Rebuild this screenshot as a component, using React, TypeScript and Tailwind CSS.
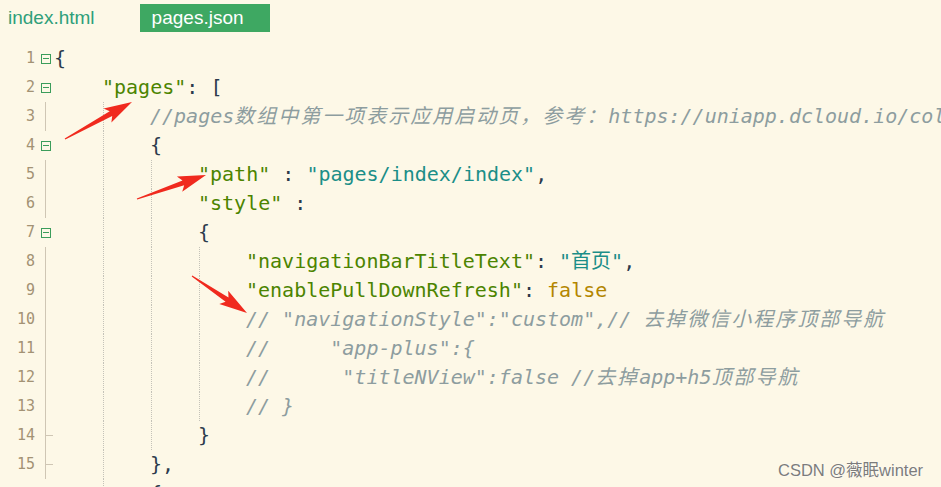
type Tok = [string, string];

const K = "text-[#4c8400]";
const S = "text-[#1b8e88]";
const P = "text-[#2c3a4c]";
const B = "text-[#b38600]";
const C = "text-[#8d9d9f] italic";

interface Line {
  n: number;
  indent: number;
  toks: Tok[];
  gutter: "box" | "line" | "tick" | "none";
}

const lines: Line[] = [
  { n: 1, indent: 0, gutter: "box", toks: [["{", P]] },
  { n: 2, indent: 1, gutter: "box", toks: [['"pages"', K], [": [", P]] },
  {
    n: 3,
    indent: 2,
    gutter: "line",
    toks: [
      ["//pages", C],
      ["数组中第一项表示应用启动页，参考：", C + " tracking-[2px]"],
      ["https://uniapp.dcloud.io/collocation/pages", C],
    ],
  },
  { n: 4, indent: 2, gutter: "box", toks: [["{", P]] },
  {
    n: 5,
    indent: 3,
    gutter: "line",
    toks: [['"path"', K], [" : ", P], ['"pages/index/index"', S], [",", P]],
  },
  { n: 6, indent: 3, gutter: "line", toks: [['"style"', K], [" :", P]] },
  { n: 7, indent: 3, gutter: "box", toks: [["{", P]] },
  {
    n: 8,
    indent: 4,
    gutter: "line",
    toks: [['"navigationBarTitleText"', K], [": ", P], ['"首页"', S], [",", P]],
  },
  {
    n: 9,
    indent: 4,
    gutter: "line",
    toks: [['"enablePullDownRefresh"', K], [": ", P], ["false", B]],
  },
  {
    n: 10,
    indent: 4,
    gutter: "line",
    toks: [
      ['// "navigationStyle":"custom",// ', C],
      ["去掉微信小程序顶部导航", C + " tracking-[2px]"],
    ],
  },
  { n: 11, indent: 4, gutter: "line", toks: [['//     "app-plus":{', C]] },
  {
    n: 12,
    indent: 4,
    gutter: "line",
    toks: [
      ['//      "titleNView":false //', C],
      ["去掉", C + " tracking-[2px]"],
      ["app+h5", C],
      ["顶部导航", C + " tracking-[2px]"],
    ],
  },
  { n: 13, indent: 4, gutter: "line", toks: [["// }", C]] },
  { n: 14, indent: 3, gutter: "tick", toks: [["}", P]] },
  { n: 15, indent: 2, gutter: "tick", toks: [["},", P]] },
  { n: 16, indent: 2, gutter: "none", toks: [["{", P]] },
];

function arrowPoints(tx: number, ty: number, px: number, py: number) {
  const dx = px - tx;
  const dy = py - ty;
  const len = Math.hypot(dx, dy);
  const ux = dx / len;
  const uy = dy / len;
  const nx = -uy;
  const ny = ux;
  const L = 24;
  const bx = px - ux * L;
  const by = py - uy * L;
  const wx = px - ux * (L + 4);
  const wy = py - uy * (L + 4);
  const pts = [
    [tx + nx * 0.6, ty + ny * 0.6],
    [bx + nx * 2.6, by + ny * 2.6],
    [wx + nx * 8, wy + ny * 8],
    [px, py],
    [wx - nx * 8, wy - ny * 8],
    [bx - nx * 2.6, by - ny * 2.6],
    [tx - nx * 0.6, ty - ny * 0.6],
  ];
  return pts.map((p) => p[0].toFixed(1) + "," + p[1].toFixed(1)).join(" ");
}

function Gutter({ kind }: { kind: Line["gutter"] }) {
  if (kind === "box") {
    return (
      <div className="w-[20px] shrink-0 h-full flex items-center pl-[6px]">
        <div className="w-[10px] h-[10px] border border-[#3b9d5b] flex items-center justify-center">
          <div className="w-[6px] h-px bg-[#3b9d5b]" />
        </div>
      </div>
    );
  }
  if (kind === "line" || kind === "tick") {
    return (
      <div className="w-[20px] shrink-0 h-full flex items-center pl-[10px]">
        <div className="w-px h-full bg-[#cfc6b4]" />
        {kind === "tick" && <div className="w-[7px] h-px bg-[#cfc6b4]" />}
      </div>
    );
  }
  return <div className="w-[20px] shrink-0 h-full" />;
}

export default function App() {
  return (
    <div className="relative w-[941px] h-[487px] overflow-hidden bg-[#fdf8e7] font-['Liberation_Sans','Noto_Sans_CJK_SC',sans-serif]">
      <div className="h-[44px] flex items-start">
        <div className="ml-[8px] mt-[4px] h-[28px] flex items-center text-[19px] text-[#2f9f7a]">
          index.html
        </div>
        <div className="ml-[45px] mt-[4px] w-[130px] h-[28px] bg-[#3ea862] flex items-center pl-[12px] text-[19px] text-white">
          pages.json
        </div>
      </div>

      <div className="font-['DejaVu_Sans_Mono','Noto_Sans_CJK_SC',monospace]">
        {lines.map((l) => (
          <div key={l.n} className="h-[29px] flex items-stretch overflow-hidden">
            <div className="w-[35px] shrink-0 flex items-center justify-end text-[15px] text-[#a39274]">
              {l.n < 16 ? l.n : ""}
            </div>
            <Gutter kind={l.gutter} />
            <div className="flex items-stretch shrink-0 whitespace-pre text-[20px] leading-[29px]">
              {Array.from({ length: l.indent }).map((_, i) => (
                <div
                  key={i}
                  className={
                    "w-[48px] shrink-0 " +
                    (i >= 1 ? "border-l border-dotted border-[#c4c2b8]" : "")
                  }
                />
              ))}
              <span className="-ml-px">
                {l.toks.map((t, i) => (
                  <span key={i} className={t[1]}>
                    {t[0]}
                  </span>
                ))}
              </span>
            </div>
          </div>
        ))}
      </div>

      <svg
        className="absolute left-0 top-0 pointer-events-none"
        width="941"
        height="487"
      >
        <polygon points={arrowPoints(65, 139, 132, 102)} fill="#f02a1e" />
        <polygon points={arrowPoints(137, 199, 206, 175)} fill="#f02a1e" />
        <polygon points={arrowPoints(192, 276, 247, 313)} fill="#f02a1e" />
      </svg>

      <div className="absolute left-[778px] top-[458px] text-[16.5px] text-[#7c7c7c] [text-shadow:0_0_2px_#ffffff]">
        CSDN @薇眠winter
      </div>
    </div>
  );
}
